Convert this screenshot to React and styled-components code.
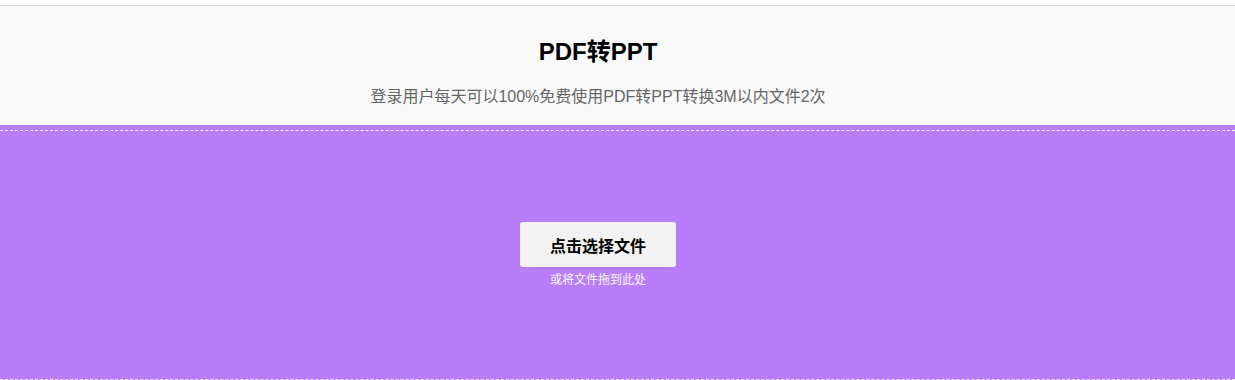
import React from 'react';
import styled, {createGlobalStyle} from 'styled-components';

const GlobalStyle = createGlobalStyle`
    html, body {
        margin:0;
        padding:0;
        background:#fff;
        overflow:hidden;
    }
    body {
        font-family:"Liberation Sans", Arial, "Noto Sans CJK SC", sans-serif;
    }
`
const Page = styled.div`
    padding-top:5px;
`
const Header = styled.div`
    background-color:#f9f9f9;
    border-top:1px solid #dedede;
    padding:32px 0 16px;
`
const Column = styled.div`
    width:1196px;
    display:flex;
    flex-direction:column;
    align-items:center;
    justify-content:${props => props.$center ? 'center' : 'flex-start'};
`
const Title = styled.h1`
    margin:0;
    font-size:24px;
    line-height:28px;
    font-weight:bold;
    color:#000;
`
const Subtitle = styled.p`
    margin:19px 0 0;
    font-size:16px;
    line-height:24px;
    color:#666;
`
const DropZone = styled.div`
    background-color:#b87ef9;
    padding-top:5px;
`
const DropInner = styled.div`
    height:248px;
    border-top:1px dashed rgba(255,255,255,0.95);
    border-bottom:1px dashed rgba(255,255,255,0.75);
    display:flex;
`
const PickBtn = styled.button`
    width:156px;
    height:45px;
    border:none;
    border-radius:3px;
    background-color:#f2f2f2;
    font-family:inherit;
    font-size:16px;
    font-weight:bold;
    color:#000;
    cursor:pointer;
`
const Hint = styled.div`
    margin-top:5px;
    font-size:12px;
    line-height:16px;
    color:#fbf7ff;
`

const App = () => {
    return (
        <Page>
            <GlobalStyle/>
            <Header>
                <Column>
                    <Title>PDF转PPT</Title>
                    <Subtitle>登录用户每天可以100%免费使用PDF转PPT转换3M以内文件2次</Subtitle>
                </Column>
            </Header>
            <DropZone>
                <DropInner>
                    <Column $center>
                        <PickBtn>点击选择文件</PickBtn>
                        <Hint>或将文件拖到此处</Hint>
                    </Column>
                </DropInner>
            </DropZone>
        </Page>
    )
}

export default App
